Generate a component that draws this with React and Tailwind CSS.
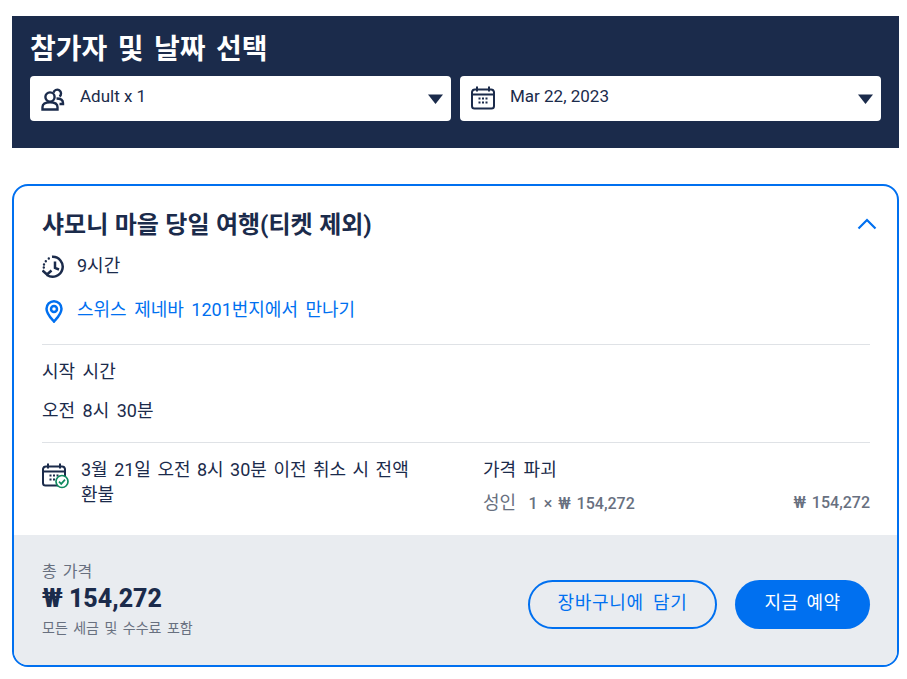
const font = { fontFamily: '"Roboto", "Noto Sans CJK KR", sans-serif' };

function Caret() {
  return (
    <svg width="15" height="10" viewBox="0 0 15 10" className="shrink-0">
      <path d="M0 0.5h15L7.5 10z" fill="#1b2b4b" />
    </svg>
  );
}

function People() {
  return (
    <svg width="24" height="24" viewBox="0 0 24 24" fill="none" stroke="#1b2b4b" strokeWidth="2.400" className="shrink-0">
      <circle cx="9" cy="10" r="4.600" />
      <path d="M1.500 22.500v-2.500c0-2.800 2.500-4.800 7.500-4.800s7.500 2 7.500 4.800v2.500z" />
      <path d="M12.500 5.800a3.800 3.800 0 1 1 6 3.700" />
      <path d="M15.500 11.500c4 0 6.500 1.500 6.500 4.500v1h-3.500" />
    </svg>
  );
}

function CalendarIcon({ check }) {
  return (
    <svg width="27" height="26" viewBox="0 0 27 26" fill="none" className="shrink-0">
      <path d="M4 3.500h16a3 3 0 0 1 3 2.500v14a2.500 2.500 0 0 1-2.500 2.500h-17A2.500 2.500 0 0 1 1 20V6a3 3 0 0 1 3-2.500z" stroke="#1b2b4b" strokeWidth="2" />
      <path d="M1 8.500h22M6 0.500v5M18 0.500v5" stroke="#1b2b4b" strokeWidth="2" />
      <path d="M7.500 12.500h2M11 12.500h2M14.500 12.500h2M7.500 16.500h2M11 16.500h2M14.500 16.500h2" stroke="#1b2b4b" strokeWidth="2" />
      {check && (
        <g>
          <circle cx="20" cy="18.500" r="6" fill="#fff" stroke="#0f8a5f" strokeWidth="1.700" />
          <path d="M17 18.700l2.200 2.200 3.800-4.300" stroke="#0f8a5f" strokeWidth="1.700" />
        </g>
      )}
    </svg>
  );
}

function HistoryIcon() {
  return (
    <svg width="24" height="24" viewBox="0 0 24 24" fill="none" stroke="#1b2b4b" strokeWidth="2.500" className="shrink-0">
      <path d="M10 1.800A10 10 0 1 1 5 20" />
      <path d="M13 6.500V13l4 1.500" />
      <path d="M0.500 15.500L5 19.500l4.500-4" />
      <path d="M6.800 3.500v.01M3.800 6.200v.01M2 9.500v.01M1.800 12.500v.01" strokeLinecap="round" strokeWidth="2.400" />
    </svg>
  );
}

function Pin() {
  return (
    <svg width="24" height="24" viewBox="0 0 24 24" fill="none" stroke="#0070f0" strokeWidth="2.500" className="shrink-0">
      <path d="M12 22.500c-1-1.500-7.500-7-7.500-12.800a7.500 7.500 0 0 1 15 0c0 5.800-6.500 11.300-7.500 12.800z" />
      <circle cx="12" cy="10" r="3" />
    </svg>
  );
}

function Select({ icon, label, gap }) {
  return (
    <div className="flex-1 h-[45px] bg-white rounded flex items-center pl-[11px] pr-[8px]">
      {icon}
      <span className={gap}>{label}</span>
      <Caret />
    </div>
  );
}

export default function App() {
  return (
    <div style={font} className="w-[907px] h-[679px] bg-white pt-4 px-3 overflow-hidden">
      <div className="w-[887px] h-[132px] bg-[#1b2b4b] px-[18px] pt-[14px]">
        <h1 className="text-[28px] leading-[40px] font-bold text-white [word-spacing:3.5px]">참가자 및 날짜 선택</h1>
        <div className="flex gap-[9px] mt-[6px]">
          <Select icon={<People />} label="Adult x 1" gap="ml-[15px] flex-1 text-[17px] text-[#1b2b4b] -mt-[3px]" />
          <Select icon={<CalendarIcon />} label="Mar 22, 2023" gap="ml-[12px] flex-1 text-[17px] text-[#1b2b4b] -mt-[3px]" />
        </div>
      </div>

      <div className="mt-9 w-[887px] h-[483px] border-2 border-[#0070f0] rounded-2xl overflow-hidden flex flex-col">
        <div className="flex-1 pl-[28px] pr-[27px] pt-[23px] text-[#1b2b4b] [word-spacing:3px]">
          <div className="flex items-center justify-between">
            <h2 className="text-[24px] leading-[32px] font-bold [word-spacing:0.5px]">샤모니 마을 당일 여행(티켓 제외)</h2>
            <svg width="20" height="12" viewBox="0 0 20 12" fill="none" stroke="#0070f0" strokeWidth="2.200" className="-mr-[7px] -mt-[2px]">
              <path d="M1.500 10.500L10 2l8.500 8.500" />
            </svg>
          </div>
          <div className="flex items-center gap-[11px] mt-[14px] text-[18px] leading-[24px]">
            <HistoryIcon />
            <span className="-mt-[3px]">9시간</span>
          </div>
          <div className="flex items-center gap-[11px] mt-[20px] text-[18px] leading-[24px] text-[#0070f0]">
            <Pin />
            <span className="-mt-[3px]">스위스 제네바 1201번지에서 만나기</span>
          </div>
          <div className="h-px bg-[#dfe2e6] mt-[21px]" />
          <p className="text-[18px] leading-[24px] mt-[15px]">시작 시간</p>
          <p className="text-[18px] leading-[24px] mt-[15px]">오전 8시 30분</p>
          <div className="h-px bg-[#dfe2e6] mt-[19px]" />
          <div className="flex mt-[15px]">
            <div className="flex w-[441px] gap-[12px]">
              <div className="pt-[5px]">
                <CalendarIcon check />
              </div>
              <p className="text-[18px] leading-[25px] w-[340px] -mt-px [word-spacing:2px]">3월 21일 오전 8시 30분 이전 취소 시 전액 환불</p>
            </div>
            <div className="flex-1">
              <p className="text-[18px] leading-[24px]">가격 파괴</p>
              <div className="flex justify-between text-[#68707f] text-[18px] leading-[24px] mt-[9px] [word-spacing:2px]">
                <span>성인 <span className="ml-[6px] text-[16px] font-medium">1 × ₩ 154,272</span></span>
                <span className="text-[16px] font-medium">₩ 154,272</span>
              </div>
            </div>
          </div>
        </div>

        <div className="h-[130px] bg-[#e9ecf0] pl-[28px] pr-[27px] flex items-center justify-between">
          <div>
            <p className="text-[16px] leading-[20px] text-[#68707f] [word-spacing:2px]">총 가격</p>
            <p className="text-[25px] leading-[34px] font-extrabold text-[#1b2b4b]">₩ 154,272</p>
            <p className="text-[14px] leading-[20px] mt-[2px] text-[#68707f] [word-spacing:2px]">모든 세금 및 수수료 포함</p>
          </div>
          <div className="flex gap-[18px] mt-[8px]">
            <button className="w-[189px] h-[49px] rounded-full border-2 border-[#0070f0] text-[#0070f0] text-[18px] pb-1 tracking-[0.7px] [word-spacing:4px]">장바구니에 담기</button>
            <button className="w-[135px] h-[49px] rounded-full bg-[#0070f0] text-white text-[18px] pb-1 tracking-[0.5px] [word-spacing:3px]">지금 예약</button>
          </div>
        </div>
      </div>
    </div>
  );
}
